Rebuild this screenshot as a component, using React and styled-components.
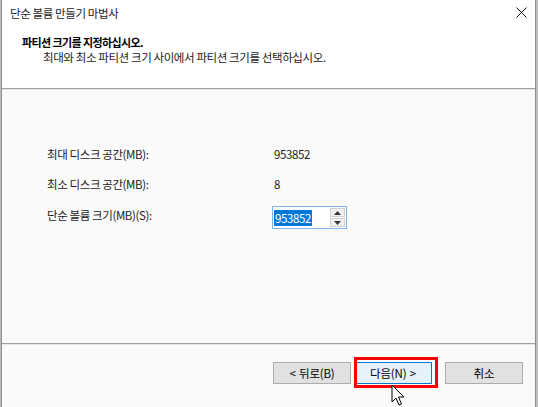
import React from "react";
import styled, { createGlobalStyle } from "styled-components";

const Global = createGlobalStyle`
  html, body { margin: 0; padding: 0; }
  body {
    width: 538px; height: 407px; overflow: hidden;
    font-family: "Noto Sans CJK KR", "Noto Sans", sans-serif;
    font-size: 11.5px; letter-spacing: -0.4px; color: #000; background: #fff;
  }
`;

const Screen = styled.div`
  display: flex;
  width: 538px;
  height: 407px;
  overflow: hidden;
  position: relative;
`;

const Edge = styled.div`
  width: ${(p) => p.$w}px;
  flex: none;
  background: #bdbdbd;
  box-shadow: inset ${(p) => (p.$side === "left" ? "-1px" : "1px")} 0 0 #8f8f8f;
`;

const Dialog = styled.div`
  flex: 1;
  display: flex;
  flex-direction: column;
  min-width: 0;
`;

const Top = styled.div`
  background: #fff;
  height: 88px;
  display: flex;
  flex-direction: column;
  align-items: stretch;
`;

const TitleBar = styled.div`
  height: 25px;
  display: flex;
  align-items: center;
  justify-content: space-between;
  padding-left: 8px;
  padding-right: 8px;
  color: #1a1a1a;
`;

const Close = styled.svg`
  width: 11px;
  height: 11px;
`;

const Header = styled.div`
  display: block;
  padding-top: 10px;
`;

const Heading = styled.div`
  font-weight: 700;
  font-size: 11px;
  letter-spacing: -0.6px;
  line-height: 15px;
  margin-left: 20px;
`;

const Sub = styled.div`
  margin-left: 41px;
  line-height: 15px;
  color: #1a1a1a;
`;

const Separator = styled.div`
  height: 1px;
  background: #a0a0a0;
  border-bottom: 1px solid #e6e6e6;
  flex: none;
`;

const Body = styled.div`
  flex: 1;
  background: #fafafa;
  padding: 49px 0 0 45px;
  display: grid;
  grid-template-columns: 225px auto;
  grid-auto-rows: 30px;
  align-content: start;
  align-items: center;
  color: #1a1a1a;
`;

const Label = styled.div`
  line-height: 15px;
  ${(p) => p.$shift && `margin-top: ${p.$shift}px;`}
`;

const Value = styled.div`
  line-height: 15px;
  padding-left: 2px;
`;

const Spin = styled.div`
  display: flex;
  width: 75px;
  height: 23px;
  box-sizing: border-box;
  border: 1px solid #7eb4ea;
  background: #fff;
  margin-top: 7px;
`;

const SpinText = styled.div`
  flex: 1;
  display: flex;
  align-items: center;
  padding-left: 1px;
`;

const Selected = styled.span`
  background: #0078d7;
  color: #fff;
  line-height: 16px;
  padding: 0 1px;
`;

const SpinButtons = styled.div`
  width: 15px;
  display: flex;
  flex-direction: column;
  gap: 1px;
  padding: 1px 1px 1px 0;
`;

const SpinBtn = styled.div`
  flex: 1;
  display: flex;
  align-items: center;
  justify-content: center;
  background: #f0f0f0;
  border: 1px solid #d0d0d0;
`;

const Footer = styled.div`
  height: 45px;
  background: #fafafa;
  display: flex;
  align-items: flex-start;
  padding: 17px 12px 0 0;
  justify-content: flex-end;
  flex: none;
`;

const Button = styled.div`
  width: 78px;
  height: 22px;
  box-sizing: border-box;
  display: flex;
  align-items: center;
  justify-content: center;
  letter-spacing: -0.2px;
  word-spacing: 1px;
  background: ${(p) => (p.$focus ? "#e5f1fb" : "#e1e1e1")};
  border: 1px solid ${(p) => (p.$focus ? "#0078d7" : "#adadad")};
  margin-left: ${(p) => p.$gap || 0}px;
  color: #000;
  position: relative;
`;

const Highlight = styled.div`
  position: absolute;
  left: -1px;
  top: -6px;
  width: 84px;
  height: 31px;
  box-sizing: border-box;
  border: 3px solid #ff0000;
  pointer-events: none;
`;

const Cursor = styled.svg`
  position: absolute;
  left: 391px;
  top: 384px;
  width: 14px;
  height: 23px;
`;

export default function App() {
  return (
    <>
      <Global />
      <Screen>
        <Edge $w={2} $side="left" />
        <Dialog>
          <Top>
            <TitleBar>
              <span>단순 볼륨 만들기 마법사</span>
              <Close viewBox="0 0 11 11">
                <path d="M0.5 0.5 L10.5 10.5 M10.5 0.5 L0.5 10.5" stroke="#111" strokeWidth="1" fill="none" />
              </Close>
            </TitleBar>
            <Header>
              <Heading>파티션 크기를 지정하십시오.</Heading>
              <Sub>최대와 최소 파티션 크기 사이에서 파티션 크기를 선택하십시오.</Sub>
            </Header>
          </Top>
          <Separator />
          <Body>
            <Label>최대 디스크 공간(MB):</Label>
            <Value>953852</Value>
            <Label>최소 디스크 공간(MB):</Label>
            <Value>8</Value>
            <Label $shift={2}>단순 볼륨 크기(MB)(S):</Label>
            <Spin>
              <SpinText>
                <Selected>953852</Selected>
              </SpinText>
              <SpinButtons>
                <SpinBtn>
                  <svg width="7" height="4" viewBox="0 0 7 4"><path d="M0 4 L3.5 0 L7 4 Z" fill="#333" /></svg>
                </SpinBtn>
                <SpinBtn>
                  <svg width="7" height="4" viewBox="0 0 7 4"><path d="M0 0 L3.5 4 L7 0 Z" fill="#333" /></svg>
                </SpinBtn>
              </SpinButtons>
            </Spin>
          </Body>
          <Separator />
          <Footer>
            <Button>&lt; 뒤로(B)</Button>
            <Button $focus $gap={3}>
              다음(N) &gt;
              <Highlight />
            </Button>
            <Button $gap={13}>취소</Button>
          </Footer>
        </Dialog>
        <Edge $w={3} $side="right" />
        <Cursor viewBox="0 0 14 23">
          <path d="M1 1 L1 18 L5 14 L8 21 L10.5 20 L7.5 13 L13 13 Z" fill="#fff" stroke="#000" strokeWidth="1" strokeLinejoin="miter" />
        </Cursor>
      </Screen>
    </>
  );
}
